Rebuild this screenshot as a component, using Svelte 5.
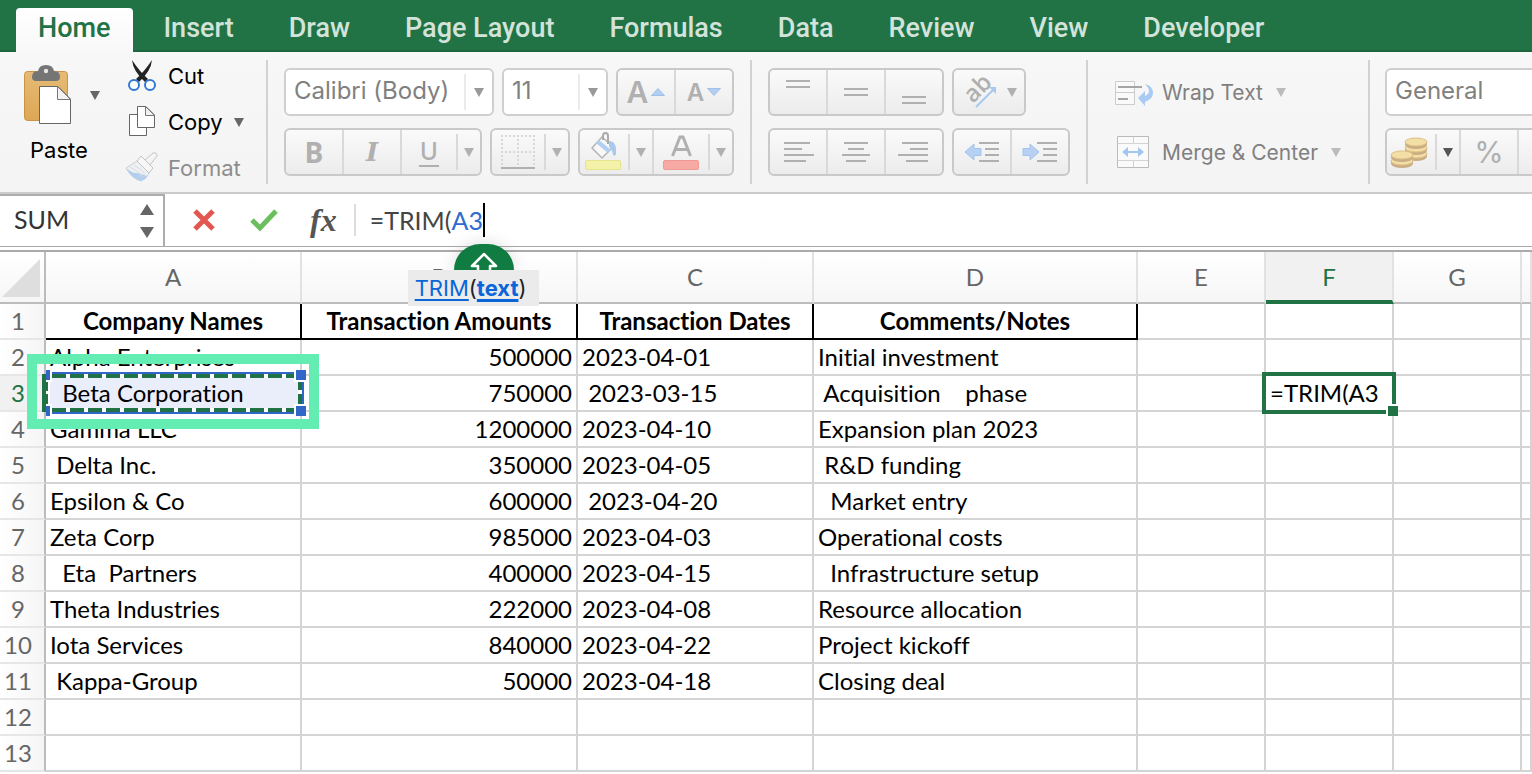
<script>
    let tabs=['Home','Insert','Draw','Page Layout','Formulas','Data','Review','View','Developer']
    let active='Home'

    let columns=[
        {name:'A',width:256},
        {name:'B',width:276},
        {name:'C',width:236},
        {name:'D',width:324},
        {name:'E',width:128},
        {name:'F',width:128},
        {name:'G',width:128}
    ]
    let titles=['Company Names','Transaction Amounts','Transaction Dates','Comments/Notes']
    let rows=[
        ['Alpha Enterprises','500000','2023-04-01','Initial investment'],
        ['  Beta Corporation','750000',' 2023-03-15',' Acquisition    phase'],
        ['Gamma LLC','1200000','2023-04-10','Expansion plan 2023'],
        [' Delta Inc.','350000','2023-04-05',' R&D funding'],
        ['Epsilon & Co','600000',' 2023-04-20','  Market entry'],
        ['Zeta Corp','985000','2023-04-03','Operational costs'],
        ['  Eta  Partners','400000','2023-04-15','  Infrastructure setup'],
        ['Theta Industries','222000','2023-04-08','Resource allocation'],
        ['Iota Services','840000','2023-04-22','Project kickoff'],
        [' Kappa-Group','50000','2023-04-18','Closing deal'],
        [],
        []
    ]

    let fontName='Calibri (Body)'
    let fontSize='11'
    let format='General'
    let cellName='SUM'
</script>

{#snippet arrow()}
    <svg class='arrow' width='10' height='9' viewBox='0 0 10 9' aria-hidden='true'><path d='M0 0h10L5 9z' fill='currentColor'/></svg>
{/snippet}

{#snippet lines(list)}
    <svg width='32' height='32' viewBox='0 0 32 32' aria-hidden='true'>
        {#each list as [x1,x2,y]}
            <path d='M{x1} {y}H{x2}' stroke='#b0b0b0' stroke-width='2'/>
        {/each}
    </svg>
{/snippet}

<div class='app'>
    <nav class='tabs'>
        {#each tabs as tab}
            <button class='tab' class:active={tab==active} on:click={()=>active=tab}>{tab}</button>
        {/each}
    </nav>

    <div class='ribbon'>
        <div class='group clipboard'>
            <button class='paste'>
                <span class='paste_icon'>
                    <svg width='48' height='60' viewBox='0 0 48 60' aria-hidden='true'>
                        <defs>
                            <linearGradient id='board' x1='0' y1='0' x2='0' y2='1'>
                                <stop offset='0' stop-color='#e6bb76'/>
                                <stop offset='1' stop-color='#dda755'/>
                            </linearGradient>
                        </defs>
                        <rect x='.5' y='6.5' width='43' height='49' rx='3' fill='url(#board)' stroke='#c89548'/>
                        <path d='M8 12q0-6 6-6 1-6 8-6t8 6q6 0 6 6 0 4-4 4H12q-4 0-4-4z' fill='#757575'/>
                        <circle cx='22' cy='6' r='2.2' fill='#e6e6e6'/>
                        <path d='M15.500 21.500H34L46.500 34V58.500H15.500z' fill='#fff' stroke='#666'/>
                        <path d='M33.500 21.500V34.500H46.500z' fill='#f2f2f2' stroke='#777'/>
                    </svg>
                    {@render arrow()}
                </span>
                Paste
            </button>
            <div class='edit'>
                <button>
                    <svg width='30' height='34' viewBox='0 0 30 34' aria-hidden='true'>
                        <path d='M5 1q8 12 16 19l-3 3Q6 12 5 1z' fill='#222'/>
                        <path d='M25 1q-8 12-16 19l3 3Q24 12 25 1z' fill='#222'/>
                        <circle cx='7' cy='26' r='5' fill='#fff' stroke='#3079d0' stroke-width='2'/>
                        <circle cx='23' cy='26' r='5' fill='#fff' stroke='#3079d0' stroke-width='2'/>
                    </svg>
                    Cut
                </button>
                <button>
                    <svg width='30' height='34' viewBox='0 0 30 34' aria-hidden='true'>
                        <path d='M2.500 9.500H19.500V30.500H2.500z' fill='#fff' stroke='#666'/>
                        <path d='M10.500 1.500H19L27.500 10V22.500H10.500z' fill='#fff' stroke='#666'/>
                        <path d='M18.500 1.500V10.500H27.500z' fill='#f2f2f2' stroke='#777'/>
                    </svg>
                    Copy
                    {@render arrow()}
                </button>
                <button disabled>
                    <svg width='30' height='34' viewBox='0 0 30 34' aria-hidden='true'>
                        <path d='M-1 17l11-7 12 12q-2 6-8 8Q5 28-1 17z' fill='#eef0f2' stroke='#ccd1d6'/>
                        <path d='M-1 17q6 5 10 5t11 3q-2 4-6 5Q5 28-1 17z' fill='#b3cfef'/>
                        <path d='M3 16q8 4 13 10M7 14q7 4 11 9' stroke='#d5dce4' fill='none'/>
                        <path d='M10 10l4-5 12 12-4 5z' fill='#f7f7f7' stroke='#c4c4c4'/>
                        <path d='M18 9l8-7q4-1 4 3l-7 9z' fill='#f4f4f4' stroke='#c4c4c4'/>
                    </svg>
                    Format
                </button>
            </div>
        </div>

        <div class='group stack'>
            <div class='line'>
                <label class='pick name'>
                    <select aria-label='Font' bind:value={fontName}><option>Calibri (Body)</option></select>
                    <span>{@render arrow()}</span>
                </label>
                <label class='pick size'>
                    <select aria-label='Font size' bind:value={fontSize}><option>11</option></select>
                    <span>{@render arrow()}</span>
                </label>
                <div class='bar'>
                    <button class='wide' aria-label='Increase font size'>
                        <b class='big'>A</b>
                        <svg width='14' height='8' viewBox='0 0 14 8' aria-hidden='true'><path d='M.5 7.500L7 .5l6.500 7z' fill='#b4d0f0' stroke='#9fc0ea'/></svg>
                    </button>
                    <button class='wide' aria-label='Decrease font size'>
                        <b class='small'>A</b>
                        <svg width='14' height='8' viewBox='0 0 14 8' aria-hidden='true'><path d='M.5.5L7 7.500l6.500-7z' fill='#b4d0f0' stroke='#9fc0ea'/></svg>
                    </button>
                </div>
            </div>
            <div class='line'>
                <div class='bar'>
                    <button class='wide bold'>B</button>
                    <button class='wide italic'>I</button>
                    <button class='medium split underline'><span>U</span></button>
                    <button class='more' aria-label='Underline options'>{@render arrow()}</button>
                </div>
                <div class='bar'>
                    <button class='mid split' aria-label='Borders'>
                        <svg width='34' height='36' viewBox='0 0 34 36' aria-hidden='true'>
                            <path d='M0 2H34M0 18H34M1 1V32M17 1V32M33 1V32' stroke='#d8d8d8' stroke-width='2' stroke-dasharray='2 2' fill='none'/>
                            <path d='M0 34H34' stroke='#b0b0b0' stroke-width='2'/>
                        </svg>
                    </button>
                    <button class='more' aria-label='Border options'>{@render arrow()}</button>
                </div>
                <div class='bar'>
                    <button class='slim split' aria-label='Fill colour'>
                        <svg width='38' height='40' viewBox='0 0 38 40' aria-hidden='true'>
                            <path d='M17 5L7 16l10 10 11-11z' fill='#f8f8f8' stroke='#b5b5b5' stroke-width='1.500'/>
                            <path d='M14 8l12 10-3 3-12-10z' fill='#b0cff2'/>
                            <path d='M24 9q8 0 7 13-1 3-3 1-1-7-4-8z' fill='#a9c8ed'/>
                            <path d='M18 8V4q0-3 2.500-3T23 4v8' fill='none' stroke='#aaa' stroke-width='2'/>
                            <rect x='.5' y='28.500' width='35' height='9' rx='1.500' fill='#f3f2a8' stroke='#e6e48c'/>
                        </svg>
                    </button>
                    <button class='more full' aria-label='Fill options'>{@render arrow()}</button>
                    <button class='medium split' aria-label='Font colour'>
                        <svg width='38' height='40' viewBox='0 0 38 40' aria-hidden='true'>
                            <path d='M10.500 24L18 5h3l7.500 19M13 17.500h13' fill='none' stroke='#b0b0b0' stroke-width='3'/>
                            <rect x='1.500' y='28.500' width='35' height='9' rx='1.500' fill='#f7a9a4' stroke='#f09a95'/>
                        </svg>
                    </button>
                    <button class='more' aria-label='Font colour options'>{@render arrow()}</button>
                </div>
            </div>
        </div>

        <div class='group stack'>
            <div class='line'>
                <div class='bar'>
                    <button class='wide' aria-label='Top align'>{@render lines([[4,28,5],[4,28,11]])}</button>
                    <button class='wide' aria-label='Middle align'>{@render lines([[4,28,13],[4,28,19]])}</button>
                    <button class='wide' aria-label='Bottom align'>{@render lines([[4,28,21],[4,28,27]])}</button>
                </div>
                <div class='bar'>
                    <button class='turn' aria-label='Orientation'>
                        <svg width='40' height='38' viewBox='0 0 40 38' aria-hidden='true'>
                            <text transform='translate(12 31) rotate(-45)' class='ab'>ab</text>
                            <path d='M15 34L33 16' stroke='#a9c8ed' stroke-width='2'/>
                            <path d='M28 14h7v7z' fill='#a9c8ed'/>
                        </svg>
                        {@render arrow()}
                    </button>
                </div>
            </div>
            <div class='line'>
                <div class='bar'>
                    <button class='wide' aria-label='Align left'>{@render lines([[2,28,7],[2,20,13],[2,32,19],[2,24,25]])}</button>
                    <button class='wide' aria-label='Align center'>{@render lines([[4,28,7],[8,24,13],[2,30,19],[6,26,25]])}</button>
                    <button class='wide' aria-label='Align right'>{@render lines([[4,30,7],[12,30,13],[0,30,19],[8,30,25]])}</button>
                </div>
                <div class='bar'>
                    <button class='wide' aria-label='Decrease indent'>
                        <svg width='36' height='32' viewBox='0 0 36 32' aria-hidden='true'>
                            <path d='M15 7H35M21 13H35M21 19H35M15 25H35' stroke='#b0b0b0' stroke-width='2'/>
                            <path d='M1 16L10 8v4.500h7v7h-7V24z' fill='#b7d1f2' stroke='#a3c3ec'/>
                        </svg>
                    </button>
                    <button class='wide' aria-label='Increase indent'>
                        <svg width='36' height='32' viewBox='0 0 36 32' aria-hidden='true'>
                            <path d='M15 7H35M21 13H35M21 19H35M15 25H35' stroke='#b0b0b0' stroke-width='2'/>
                            <path d='M17 16L8 8v4.500H1v7h7V24z' fill='#b7d1f2' stroke='#a3c3ec'/>
                        </svg>
                    </button>
                </div>
            </div>
        </div>

        <div class='group stack cells'>
            <button>
                <svg width='40' height='32' viewBox='0 0 40 32' aria-hidden='true'>
                    <path d='M1.500 5.500H20.500V28.500H1.500zM2 16.500H20' fill='#fafafa' stroke='#ccc'/>
                    <path d='M4 11H28M4 23H14' stroke='#a5a5a5' stroke-width='2'/>
                    <path d='M31 8q8 2 8 9 0 6-8 9v4l-7-8 7-7v5q8-4 0-12z' fill='#a9caf3'/>
                </svg>
                Wrap Text
                {@render arrow()}
            </button>
            <button>
                <svg width='40' height='32' viewBox='0 0 40 32' aria-hidden='true'>
                    <path d='M3.500.5H34.500V31.500H3.500z' fill='#fafafa' stroke='#bbb'/>
                    <path d='M4 7.500H34M4 24.500H34M19.500 1V7M19.500 25V31' stroke='#d4d4d4' fill='none'/>
                    <path d='M10 16H28' stroke='#a3c6f0' stroke-width='2'/>
                    <path d='M8 16l6-5v10zM30 16l-6-5v10z' fill='#a3c6f0'/>
                </svg>
                Merge &amp; Center
                {@render arrow()}
            </button>
        </div>

        <div class='group stack number'>
            <div class='line'>
                <label class='pick format'>
                    <select aria-label='Number format' bind:value={format}><option>General</option></select>
                    <span>{@render arrow()}</span>
                </label>
            </div>
            <div class='line'>
                <div class='bar'>
                    <button class='slim split' aria-label='Accounting format'>
                        <svg width='38' height='32' viewBox='0 0 38 32' aria-hidden='true'>
                            {#each [[24,18],[24,12],[24,6],[10,25],[10,19]] as [x,y]}
                                <path d='M{x-11} {y}v3q2 4 11 4t11-4v-3z' fill='#c9ad85'/>
                                <ellipse cx={x} cy={y} rx='11' ry='4' fill='#f3dfa6' stroke='#dcc084'/>
                            {/each}
                        </svg>
                    </button>
                    <button class='more full dark' aria-label='Currency options'>{@render arrow()}</button>
                    <button class='wide percent'>%</button>
                    <button class='wide' aria-label='Comma style'></button>
                </div>
            </div>
        </div>
    </div>

    <div class='formula_bar'>
        <div class='name_box'>
            <input aria-label='Name box' bind:value={cellName}>
            <svg width='14' height='34' viewBox='0 0 14 34' aria-hidden='true'><path d='M0 11L7 0l7 11zM0 23h14L7 34z' fill='#666'/></svg>
        </div>
        <button class='cancel' aria-label='Cancel'>
            <svg width='22' height='22' viewBox='0 0 22 22'><path d='M2 2l18 18M20 2L2 20' stroke='#e25750' stroke-width='5'/></svg>
        </button>
        <button class='enter' aria-label='Enter'>
            <svg width='28' height='22' viewBox='0 0 28 22'><path d='M2 11l8 8L26 2' fill='none' stroke='#6cbf5f' stroke-width='5'/></svg>
        </button>
        <button class='fx'>fx</button>
        <div class='formula' role='textbox' aria-label='Formula' tabindex='0'>
            =TRIM(<span>A3</span><i class='caret'></i>
            <div class='hint'>
                <div class='caps'>
                    <svg width='28' height='28' viewBox='0 0 28 28' aria-hidden='true'><path d='M14 2L2 14h6v10h12V14h6z' fill='none' stroke='#fff' stroke-width='2.500' stroke-linejoin='round'/></svg>
                </div>
                <p><a href='#trim'>TRIM</a>(<a href='#text' class='argument'>text</a>)</p>
            </div>
        </div>
    </div>

    <div class='sheet'>
        <table>
            <colgroup>
                <col class='index'>
                {#each columns as column}
                    <col style='width:{column.width}px'>
                {/each}
                <col>
            </colgroup>
            <thead>
                <tr>
                    <th class='corner' aria-label='Select all'><svg width='38' height='38' viewBox='0 0 38 38' aria-hidden='true'><path d='M38 0V38H0z' fill='#dedede'/></svg></th>
                    {#each columns as column}
                        <th class:current={column.name=='F'}>{column.name}</th>
                    {/each}
                    <th></th>
                </tr>
            </thead>
            <tbody>
                <tr class='titles'>
                    <th>1</th>
                    {#each titles as title}
                        <td>{title}</td>
                    {/each}
                    <td></td><td></td><td></td><td></td>
                </tr>
                {#each rows as row,i}
                    <tr>
                        <th class:current={i==1}>{i+2}</th>
                        {#each columns as column,j}
                            <td class:amount={j==1}>
                                {#if i==1 && j==0}
                                    <div class='marked'>{row[j]}
                                        <svg class='ants' width='266' height='46' viewBox='0 0 266 46' aria-hidden='true'>
                                            <path d='M4 3H261V43H4' fill='none' stroke='#2f66c8' stroke-width='2'/>
                                            <path d='M6 6H258V40H6z' fill='none' stroke='#fff' stroke-width='4'/>
                                            <path d='M10 6H258M10 40H258' fill='none' stroke='#217346' stroke-width='4' stroke-dasharray='14 4'/>
                                            <path d='M0 4H4V12H6V21H4V24H6V34H4V42H0z' fill='#217346'/>
                                            <path d='M258 12V20M258 24V34' stroke='#217346' stroke-width='4'/>
                                            <path d='M4 0H10V12H4zM4 34H10V46H4zM252 0H264V12H252zM252 34H264V46H252z' fill='#fff'/>
                                            <path d='M4 0H8V10H4zM4 36H8V46H4zM254 0H264V10H254zM254 36H264V46H254z' fill='#2f66c8'/>
                                        </svg>
                                        <i class='highlight'></i>
                                    </div>
                                {:else if i==1 && j==5}
                                    <div class='editing'>=TRIM(A3<i></i></div>
                                {:else}
                                    {row[j] || ''}
                                {/if}
                            </td>
                        {/each}
                        <td></td>
                    </tr>
                {/each}
            </tbody>
        </table>
    </div>
</div>

<style>
    :global(body)
    {
        margin:0;
        overflow:hidden
    }
    *
    {
        box-sizing:border-box
    }
    button, select, input
    {
        margin:0;
        padding:0;
        border:none;
        background:none;
        font:inherit;
        color:inherit;
        outline:none
    }
    svg
    {
        display:block;
        flex:none;
        overflow:visible
    }
    .app
    {
        display:flex;
        flex-direction:column;
        height:100vh;
        overflow:hidden;
        background:white;
        font-family:Inter, 'Liberation Sans', sans-serif;
        font-size:22px;
        font-variant-ligatures:none;
        color:black
    }
    .tabs
    {
        display:flex;
        flex:none;
        gap:1px;
        height:52px;
        padding:8px 0 0 16px;
        background:#217346;
        box-shadow:inset 0 -2px #1d653e
    }
    .tab
    {
        height:44px;
        padding:0 27px 5px;
        font-family:Roboto, sans-serif;
        font-size:27px;
        font-weight:500;
        color:#d3e3da;
        white-space:nowrap
    }
    .tab.active
    {
        padding:0 23px 5px 22px;
        margin-right:2px;
        border-radius:4px 4px 0 0;
        background:linear-gradient(#fff,#f8f8f8);
        color:#217346
    }
    .ribbon
    {
        display:flex;
        flex:none;
        height:142px;
        padding:8px 0;
        background:linear-gradient(#f7f7f7,#f4f4f4);
        border-bottom:2px solid #cbcbcb;
        overflow:hidden
    }
    .group
    {
        display:flex;
        flex:none;
        padding:8px 16px;
        border-right:2px solid #d2d2d2
    }
    .stack
    {
        flex-direction:column;
        gap:12px
    }
    .line
    {
        display:flex;
        gap:8px
    }
    .clipboard
    {
        width:268px;
        padding:0 0 0 24px
    }
    .paste
    {
        display:flex;
        flex-direction:column;
        align-items:flex-start;
        justify-content:flex-start;
        gap:4px;
        width:103px;
        line-height:32px;
        text-indent:6px
    }
    .paste_icon
    {
        display:flex;
        align-items:center;
        gap:18px;
        height:70px;
        color:#666
    }
    .edit
    {
        display:flex;
        flex-direction:column;
        margin-top:-7px
    }
    .edit button
    {
        display:flex;
        flex:none;
        align-items:center;
        gap:11px;
        height:46px
    }
    .edit .arrow
    {
        color:#666
    }
    .edit button:disabled
    {
        color:#8d8d8d
    }
    .pick
    {
        display:flex;
        height:48px;
        border:2px solid #cfcfcf;
        border-radius:6px;
        background:white;
        color:#808080
    }
    .pick select
    {
        flex:1;
        min-width:0;
        appearance:none;
        padding:0 0 4px 8px;
        font-size:24px
    }
    .pick span
    {
        display:flex;
        align-items:center;
        justify-content:center;
        width:28px;
        margin:4px 0;
        border-left:2px solid #ebebeb;
        color:#999
    }
    .name
    {
        width:210px
    }
    .size
    {
        width:106px
    }
    .format
    {
        width:260px
    }
    .bar
    {
        display:flex;
        height:48px;
        border:2px solid #c9c9c9;
        border-radius:6px;
        background:linear-gradient(#fafafa,#ececec);
        color:#b0b0b0
    }
    .bar button
    {
        display:flex;
        align-items:center;
        justify-content:center;
        border-right:2px solid #d9d9d9
    }
    .bar button:last-child
    {
        border-right:none
    }
    .bar .wide
    {
        width:58px;
        gap:3px
    }
    .bar .wide:last-child, .bar .medium
    {
        width:56px
    }
    .bar .mid
    {
        width:54px
    }
    .bar .slim
    {
        width:50px
    }
    .bar .more
    {
        width:22px
    }
    .bar .more.full
    {
        width:24px
    }
    .bar .split
    {
        border-image:linear-gradient(transparent 10%,#d9d9d9 10%,#d9d9d9 90%,transparent 90%) 1
    }
    .bar .turn
    {
        width:70px;
        gap:6px
    }
    .bar .dark
    {
        color:#555
    }
    .big
    {
        font-size:30px
    }
    .small
    {
        font-size:24px
    }
    .big, .small
    {
        font-weight:600
    }
    .bold
    {
        font-family:'Open Sans', sans-serif;
        font-size:28px;
        font-weight:700
    }
    .italic
    {
        font-family:'DejaVu Serif', serif;
        font-size:26px;
        font-style:italic;
        font-weight:700
    }
    .underline span
    {
        margin-top:2px;
        line-height:26px;
        padding:0 1px;
        font-size:24px;
        font-weight:500;
        border-bottom:2px solid #b0b0b0
    }
    .ab
    {
        font-family:'Open Sans', sans-serif;
        font-size:24px;
        font-weight:600;
        fill:#b0b0b0
    }
    .percent
    {
        font-size:30px
    }
    .cells
    {
        width:282px;
        padding:8px 0 8px 26px;
        font-size:21px;
        color:#808080
    }
    .cells button
    {
        display:flex;
        align-items:center;
        gap:8px;
        height:48px;
        white-space:nowrap
    }
    .cells .arrow
    {
        margin-left:5px;
        color:#bbb
    }
    .number
    {
        padding-left:15px;
        border-right:none
    }
    .formula_bar
    {
        display:flex;
        flex:none;
        align-items:center;
        height:53px;
        border-bottom:1px solid #aaa
    }
    .name_box
    {
        display:flex;
        align-items:center;
        align-self:stretch;
        width:165px;
        padding:0 9px 0 14px;
        border-top:2px solid #adadad;
        border-right:2px solid #adadad;
        font-family:Lato, sans-serif;
        font-size:25px;
        color:#333
    }
    .name_box input
    {
        flex:1;
        min-width:0;
        padding-bottom:4px
    }
    .cancel
    {
        margin-left:28px
    }
    .enter
    {
        margin-left:35px
    }
    .fx
    {
        margin-left:32px;
        padding-right:17px;
        border-right:2px solid #ddd;
        font-family:'Liberation Serif', serif;
        font-size:32px;
        line-height:32px;
        font-style:italic;
        font-weight:700;
        color:#555
    }
    .formula
    {
        position:relative;
        display:flex;
        align-items:center;
        flex:1;
        margin-left:14px;
        font-family:Lato, sans-serif;
        font-size:25px;
        color:#444;
        outline:none
    }
    .formula span
    {
        color:#2f6bd0
    }
    .caret
    {
        width:2px;
        height:34px;
        background:black
    }
    .hint
    {
        position:absolute;
        top:41px;
        left:38px;
        z-index:2;
        font-family:Inter, sans-serif;
        font-size:22px
    }
    .caps
    {
        display:flex;
        justify-content:center;
        width:60px;
        height:26px;
        margin-left:46px;
        padding-top:8px;
        border-radius:30px 30px 0 0;
        background:#107c41;
        box-shadow:0 0 16px rgba(0,0,0,.15);
        overflow:hidden
    }
    .hint p
    {
        margin:0;
        padding:0 12px 0 7px;
        line-height:36px;
        background:#ebebeb;
        color:#222
    }
    .hint a
    {
        color:#0a66d8;
        text-decoration-thickness:2px;
        text-underline-offset:3px
    }
    .hint .argument
    {
        font-weight:700;
        text-decoration-thickness:3px
    }
    .sheet
    {
        flex:1;
        min-height:0;
        margin-top:3px;
        border-top:2px solid #aaa;
        overflow:hidden
    }
    table
    {
        width:100%;
        table-layout:fixed;
        border-collapse:separate;
        border-spacing:0;
        font-family:Lato, sans-serif;
        font-size:24px
    }
    .index
    {
        width:46px
    }
    th
    {
        height:36px;
        padding:0;
        font-weight:400;
        color:#666
    }
    thead th
    {
        height:52px;
        padding-bottom:2px;
        border-right:2px solid #e2e2e2;
        border-bottom:2px solid #bcbcbc;
        background:linear-gradient(#fff,#f6f6f6)
    }
    thead th.current
    {
        padding-bottom:0;
        border-bottom:4px solid #217346;
        background:#f1f1f1;
        color:#217346
    }
    th.corner
    {
        border-right-color:#bcbcbc
    }
    .corner svg
    {
        margin:4px 0 0 2px
    }
    tbody th
    {
        padding-right:8px;
        border-right:2px solid #bcbcbc;
        border-bottom:2px solid #e6e6e6;
        background:linear-gradient(90deg,#fff,#f5f5f5);
        line-height:34px
    }
    tbody th.current
    {
        background:#f1f1f1;
        color:#217346
    }
    td
    {
        height:36px;
        padding:0 4px;
        border-right:2px solid #d4d4d4;
        border-bottom:2px solid #d4d4d4;
        line-height:34px;
        white-space:pre
    }
    .amount
    {
        text-align:right
    }
    .titles td
    {
        padding:0;
        font-weight:700;
        text-align:center
    }
    .titles td:nth-child(-n+5)
    {
        border-color:black
    }
    .marked, .editing
    {
        position:relative;
        margin:0 -4px;
        padding:0 4px
    }
    .marked
    {
        background:#e9eefa
    }
    .ants
    {
        position:absolute;
        top:-6px;
        left:-4px
    }
    .highlight
    {
        position:absolute;
        top:-22px;
        left:-19px;
        right:-19px;
        bottom:-19px;
        border:10px solid #64edb2
    }
    .editing::before
    {
        content:'';
        position:absolute;
        inset:-4px;
        border:4px solid #217346
    }
    .editing i
    {
        position:absolute;
        right:-6px;
        bottom:-6px;
        width:12px;
        height:12px;
        border:solid white;
        border-width:2px 0 0 2px;
        background:#217346
    }
</style>
